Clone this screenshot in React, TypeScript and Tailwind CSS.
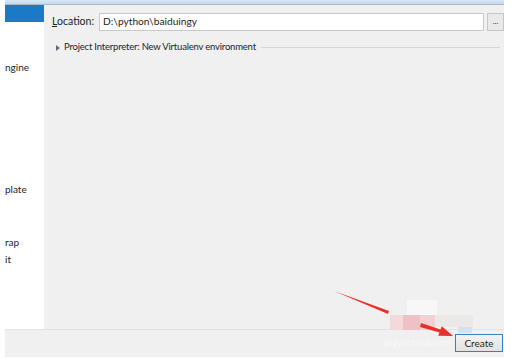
const font = { fontFamily: "Lato, 'Noto Sans', sans-serif" };

const SideItem = ({ text, className }: { text: string; className: string }) => (
  <div className={`h-[14px] leading-[14px] text-[10px] text-[#1e1e1e] whitespace-nowrap ${className}`}>{text}</div>
);

export default function App() {
  return (
    <div className="relative w-[516px] h-[358px] bg-white overflow-hidden" style={font}>
      <div className="flex flex-col h-full pl-[5px] pr-[12px]">
        {/* title strip */}
        <div className="h-[4px] bg-gradient-to-b from-[#d6e7f7] to-[#c3dbf1]" />
        <div className="h-[1px] bg-[#aeb9c4]" />

        <div className="flex h-[324px]">
          {/* left list */}
          <div className="w-[40px] bg-white flex flex-col overflow-hidden">
            <div className="h-[17px] bg-[#1a7ac8]" />
            <SideItem text="ngine" className="mt-[38px]" />
            <SideItem text="plate" className="mt-[108px]" />
            <SideItem text="rap" className="mt-[39px]" />
            <SideItem text="it" className="mt-[3px]" />
          </div>

          {/* settings panel */}
          <div className="flex-1 bg-[#f0f0f0] flex flex-col pt-[8px]">
            <div className="flex items-center pl-[8px]">
              <div className="w-[47px] text-[10.5px] text-[#1e1e1e]">
                <span className="underline">L</span>ocation:
              </div>
              <div className="w-[385px] h-[18px] bg-white border border-[#c9c9c9] flex items-center pl-[3px] text-[10.2px] text-[#1e1e1e]">
                D:\python\baiduingy
              </div>
              <div className="ml-[3px] w-[17px] h-[18px] border border-[#c6c6c6] bg-[#e9e9e9] flex items-center justify-center text-[8px] leading-none text-[#333] pb-[2px]">
                ...
              </div>
            </div>

            <div className="flex items-center mt-[10px] pl-[12px] pr-[4px] h-[13px]">
              <svg width="4" height="6" viewBox="0 0 4 6" className="shrink-0">
                <path d="M0 0 L4 3 L0 6 Z" fill="#5c6f82" />
              </svg>
              <span className="ml-[4px] text-[9.5px] tracking-[-0.2px] text-[#1e1e1e] whitespace-nowrap">
                Project Interpreter: New Virtualenv environment
              </span>
              <div className="flex-1 h-[1px] bg-[#d6d6d6] ml-[5px]" />
            </div>
          </div>
        </div>

        {/* bottom bar */}
        <div className="h-[28px] bg-[#f0f0f0] border-t border-[#e2e2e2] flex justify-end pt-[4px] pr-[1px]">
          <button className="w-[48px] h-[18px] border border-[#3c7fb1] bg-gradient-to-b from-[#f2f2f2] to-[#e2e2e2] text-[10px] leading-none text-[#1e1e1e]">
            Create
          </button>
        </div>
      </div>

      {/* annotation overlay */}
      <svg className="absolute inset-0 pointer-events-none" width="516" height="358" viewBox="0 0 516 358">
        <rect x="407" y="300" width="30" height="15" fill="#f7f7f7" />
        <rect x="390" y="315" width="13" height="15" fill="#f3d9db" />
        <rect x="403" y="315" width="17" height="15" fill="#eec1c5" />
        <rect x="420" y="315" width="15" height="15" fill="#f1d1d3" />
        <rect x="435" y="315" width="38" height="12" fill="#ece8e8" />
        <rect x="458" y="327" width="14" height="6" fill="#d6e3ef" />
        <polygon points="334,291 389,311 388,314" fill="#e8302a" />
        <polygon points="421,323 440.5,329.6 441.8,326.3 453,336 438.2,335.7 439.5,332.4 420,327" fill="#e8302a" />
        <text x="384" y="346" fill="#ffffff" fillOpacity="0.6" fontSize="8.5" fontFamily="Lato, sans-serif">
          jingyan.baidu.com
        </text>
      </svg>
    </div>
  );
}
